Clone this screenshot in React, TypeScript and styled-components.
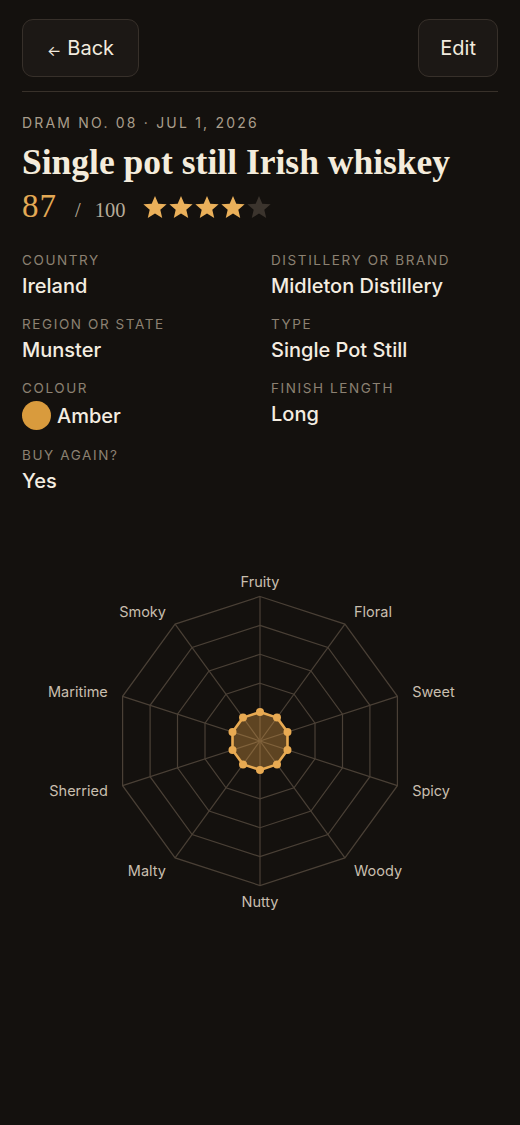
import styled, { createGlobalStyle } from "styled-components";

const GlobalStyle = createGlobalStyle`
  html, body {
    margin: 0;
    padding: 0;
    background: #14110e;
  }
  body {
    font-family: Inter, "Open Sans", sans-serif;
    color: #f2ebdf;
  }
`;

const fields = [
  { label: "Country", value: "Ireland" },
  { label: "Distillery or brand", value: "Midleton Distillery" },
  { label: "Region or state", value: "Munster" },
  { label: "Type", value: "Single Pot Still" },
  { label: "Colour", value: "Amber", swatch: "#d99b3d" },
  { label: "Finish length", value: "Long" },
  { label: "Buy again?", value: "Yes" },
];

const axes = [
  "Fruity",
  "Floral",
  "Sweet",
  "Spicy",
  "Woody",
  "Nutty",
  "Malty",
  "Sherried",
  "Maritime",
  "Smoky",
];
const scores = [1, 1, 1, 1, 1, 1, 1, 1, 1, 1];

const Star = ({ on }: { on: boolean }) => (
  <svg width="26" height="26" viewBox="0 0 24 24">
    <path
      d="M12 1.8l3.05 7.1 7.7.65-5.85 5.05 1.77 7.55L12 18.1l-6.67 4.05 1.77-7.55-5.85-5.05 7.7-.65z"
      fill={on ? "#eab05a" : "#3b342d"}
    />
  </svg>
);

const Radar = () => {
  const cx = 238;
  const cy = 180;
  const R = 144.5;
  const n = axes.length;
  const pt = (i: number, r: number) => {
    const a = -Math.PI / 2 + (i * 2 * Math.PI) / n;
    return [cx + r * Math.cos(a), cy + r * Math.sin(a)];
  };
  const ring = (f: number) =>
    axes.map((_, i) => pt(i, R * f).map((v) => v.toFixed(1)).join(",")).join(" ");
  const data = scores.map((s, i) => pt(i, (R * s) / 5));

  return (
    <svg width="476" height="360" viewBox="0 0 476 360">
      {[0.2, 0.4, 0.6, 0.8, 1].map((f) => (
        <polygon key={f} points={ring(f)} fill="none" stroke="#4a4036" strokeWidth="1.2" />
      ))}
      {axes.map((_, i) => {
        const [x, y] = pt(i, R);
        return <line key={i} x1={cx} y1={cy} x2={x} y2={y} stroke="#4a4036" strokeWidth="1.2" />;
      })}
      <polygon
        points={data.map((p) => p.join(",")).join(" ")}
        fill="rgba(226, 160, 72, 0.36)"
        stroke="#e8aa52"
        strokeWidth="2.6"
        strokeLinejoin="round"
      />
      {data.map(([x, y], i) => (
        <circle key={i} cx={x} cy={y} r="4" fill="#e8aa52" />
      ))}
      {axes.map((name, i) => {
        const [x, y] = pt(i, 160);
        const a = -Math.PI / 2 + (i * 2 * Math.PI) / n;
        const c = Math.cos(a);
        const anchor = Math.abs(c) < 0.01 ? "middle" : c > 0 ? "start" : "end";
        return (
          <AxisLabel key={name} x={x} y={y} textAnchor={anchor} dominantBaseline="central">
            {name}
          </AxisLabel>
        );
      })}
    </svg>
  );
};

export default function App() {
  return (
    <Page>
      <GlobalStyle />
      <TopBar>
        <NavButton>
          <Arrow>←</Arrow> Back
        </NavButton>
        <NavButton $narrow>Edit</NavButton>
      </TopBar>
      <Divider />
      <Meta>Dram No. 08 · Jul 1, 2026</Meta>
      <Title>Single pot still Irish whiskey</Title>
      <ScoreRow>
        <Score>87</Score>
        <OutOf>/ 100</OutOf>
        <Stars>
          {[1, 2, 3, 4, 5].map((s) => (
            <Star key={s} on={s <= 4} />
          ))}
        </Stars>
      </ScoreRow>
      <FieldGrid>
        {fields.map((f) => (
          <Field key={f.label}>
            <FieldLabel>{f.label}</FieldLabel>
            <FieldValue>
              {f.swatch && <Swatch $color={f.swatch} />}
              {f.value}
            </FieldValue>
          </Field>
        ))}
      </FieldGrid>
      <ChartWrap>
        <Radar />
      </ChartWrap>
    </Page>
  );
}

const Page = styled.div`
  min-height: 1125px;
  box-sizing: border-box;
  padding: 19px 22px 0;
  background: #14110e;
`;

const TopBar = styled.div`
  display: flex;
  justify-content: space-between;
  align-items: center;
`;

const NavButton = styled.button<{ $narrow?: boolean }>`
  display: flex;
  align-items: center;
  gap: 6px;
  height: 58px;
  box-sizing: border-box;
  padding: 0 ${({ $narrow }) => ($narrow ? "21px" : "24px")};
  background: #1c1815;
  border: 1px solid #37302a;
  border-radius: 11px;
  color: #f2ebdf;
  font-family: Inter, "Open Sans", sans-serif;
  font-size: 20px;
  font-weight: 400;
`;

const Arrow = styled.span`
  font-size: 15px;
  position: relative;
  top: 2px;
`;

const Divider = styled.div`
  height: 1px;
  background: #38312a;
  margin-top: 14px;
`;

const Meta = styled.div`
  margin-top: 22px;
  font-size: 14px;
  letter-spacing: 2.2px;
  text-transform: uppercase;
  color: #a99d8b;
  line-height: 18px;
`;

const Title = styled.h1`
  margin: 8px 0 0;
  font-family: "Liberation Serif", "DejaVu Serif", serif;
  font-size: 35.5px;
  font-weight: 700;
  color: #f4ecdc;
  line-height: 44px;
`;

const ScoreRow = styled.div`
  display: flex;
  align-items: baseline;
  margin-top: 4px;
`;

const Score = styled.span`
  font-family: "Liberation Serif", "DejaVu Serif", serif;
  font-size: 33px;
  color: #e3a955;
  letter-spacing: 1px;
`;

const OutOf = styled.span`
  font-family: "Liberation Serif", "DejaVu Serif", serif;
  font-size: 20.5px;
  color: #b6ab99;
  margin-left: 18px;
  word-spacing: 9px;
`;

const Stars = styled.span`
  display: flex;
  align-self: center;
  margin-left: 16px;
`;

const FieldGrid = styled.div`
  display: grid;
  grid-template-columns: 249px 1fr;
  row-gap: 16px;
  margin-top: 26px;
`;

const Field = styled.div`
  display: flex;
  flex-direction: column;
  gap: 4px;
`;

const FieldLabel = styled.div`
  font-size: 13.5px;
  letter-spacing: 1.6px;
  text-transform: uppercase;
  color: #8c8172;
  line-height: 18px;
`;

const FieldValue = styled.div`
  display: flex;
  align-items: center;
  gap: 6px;
  font-size: 20px;
  font-weight: 500;
  color: #f4ede1;
  line-height: 26px;
`;

const Swatch = styled.span<{ $color: string }>`
  width: 29px;
  height: 29px;
  border-radius: 50%;
  background: ${({ $color }) => $color};
`;

const ChartWrap = styled.div`
  display: flex;
  justify-content: center;
  margin-top: 67px;
`;

const AxisLabel = styled.text`
  font-family: Inter, "Open Sans", sans-serif;
  font-size: 14.5px;
  fill: #c9bfae;
`;
